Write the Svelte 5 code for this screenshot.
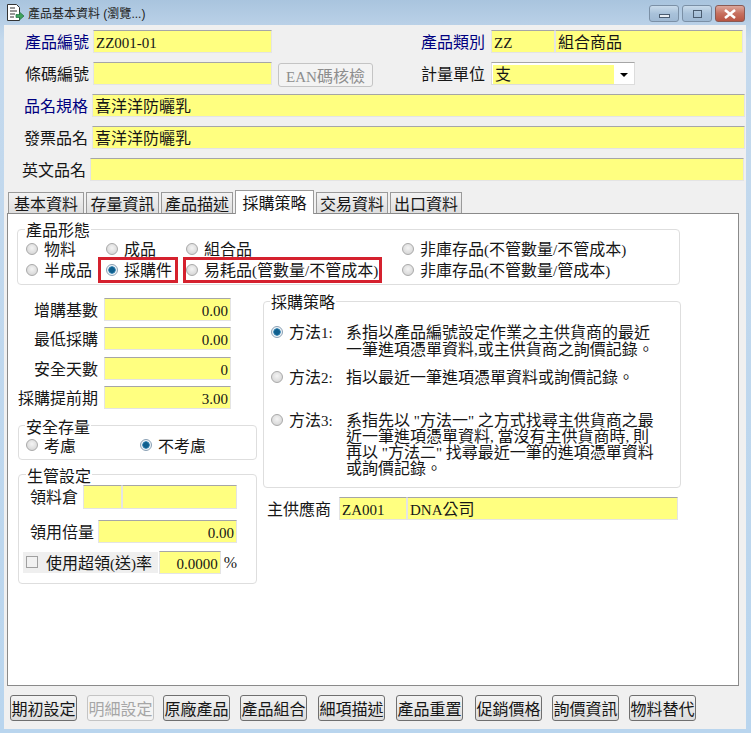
<script>
	const tabs = ["基本資料", "存量資訊", "產品描述", "採購策略", "交易資料", "出口資料"];
	const tools = ["期初設定", "明細設定", "原廠產品", "產品組合", "細項描述", "產品重置", "促銷價格", "詢價資訊", "物料替代"];
	const qty = [
		{ label: "增購基數", value: "0.00" },
		{ label: "最低採購", value: "0.00" },
		{ label: "安全天數", value: "0" },
		{ label: "採購提前期", value: "3.00" }
	];
	const methods = [
		{ label: "方法1:", on: true, lines: ["系指以產品編號設定作業之主供貨商的最近", "一筆進項憑單資料,或主供貨商之詢價記錄。"] },
		{ label: "方法2:", on: false, lines: ["指以最近一筆進項憑單資料或詢價記錄。"] },
		{ label: "方法3:", on: false, lines: ['系指先以 "方法一" 之方式找尋主供貨商之最', "近一筆進項憑單資料, 當沒有主供貨商時, 則", '再以 "方法二" 找尋最近一筆的進項憑單資料', "或詢價記錄。"] }
	];

	// ascii runs are set smaller than the CJK text, like the original PMingLiU
	function chunks(text) {
		return text.split(/([\x20-\x7e]+)/);
	}
</script>

{#snippet t(text)}{#each chunks(text) as part, i}{#if i % 2}<span class="l">{part}</span>{:else}{part}{/if}{/each}{/snippet}

{#snippet radio(text, on = false)}
	<label class="radio"><input type="radio" checked={on} disabled /><span>{@render t(text)}</span></label>
{/snippet}

<div class="window">
	<header class="titlebar">
		<svg class="app-icon" width="20" height="20" viewBox="0 0 20 20">
			<path d="M2.500 1.500h9l3 3v13h-12z" fill="#fff" stroke="#333" />
			<path d="M5 5h5M5 8h7M5 11h5M5 14h4" stroke="#333" />
			<path d="M11 11.500h3.500v-2.500l4.500 4-4.500 4v-2.500h-3.500z" fill="#3fa35c" stroke="#1f6e44" stroke-width=".7" />
		</svg>
		<span class="title">{@render t("產品基本資料 (瀏覽...)")}</span>
		<div class="win-btns">
			<div class="win-btn"><i class="min"></i></div>
			<div class="win-btn"><i class="max"></i></div>
			<div class="win-btn close">
				<svg width="14" height="10" viewBox="0 0 14 10"><path d="M2 1l10 8M12 1L2 9" stroke="#fff" stroke-width="2.600" /></svg>
			</div>
		</div>
	</header>

	<main class="client">
		<div class="row">
			<span class="cap blue">產品編號</span>
			<div class="field w179">{@render t("ZZ001-01")}</div>
			<div class="right">
				<span class="cap-r blue">產品類別</span>
				<div class="field code">{@render t("ZZ")}</div>
				<div class="field grow">組合商品</div>
			</div>
		</div>
		<div class="row">
			<span class="cap">條碼編號</span>
			<div class="field w179"></div>
			<button class="ean" disabled>{@render t("EAN碼核檢")}</button>
			<div class="right">
				<span class="cap-r">計量單位</span>
				<div class="select">
					<div class="select-val">支</div>
					<i class="caret"></i>
				</div>
			</div>
		</div>
		<div class="row">
			<span class="cap blue narrow1">品名規格</span>
			<div class="field grow wide">喜洋洋防曬乳</div>
		</div>
		<div class="row">
			<span class="cap narrow1">發票品名</span>
			<div class="field grow wide">喜洋洋防曬乳</div>
		</div>
		<div class="row">
			<span class="cap narrow2">英文品名</span>
			<div class="field grow wide2"></div>
		</div>

		<nav class="tabs">
			{#each tabs as tab, i}
				<div class="tab" class:active={i === 3}>{tab}</div>
			{/each}
		</nav>

		<section class="panel">
			<fieldset class="form-type">
				<legend>產品形態</legend>
				<div class="type-grid">
					{@render radio("物料")}
					{@render radio("成品")}
					{@render radio("組合品")}
					{@render radio("非庫存品(不管數量/不管成本)")}
					{@render radio("半成品")}
					<div class="mark mark-a">{@render radio("採購件", true)}</div>
					<div class="mark mark-b">{@render radio("易耗品(管數量/不管成本)")}</div>
					{@render radio("非庫存品(不管數量/管成本)")}
				</div>
			</fieldset>

			<div class="columns">
				<div class="col-left">
					<div class="qty">
						{#each qty as q}
							<div class="qty-row">
								<span class="qty-label">{q.label}</span>
								<div class="field num">{@render t(q.value)}</div>
							</div>
						{/each}
					</div>

					<fieldset class="safety">
						<legend>安全存量</legend>
						<div class="safety-row">
							{@render radio("考慮")}
							{@render radio("不考慮", true)}
						</div>
					</fieldset>

					<fieldset class="prod">
						<legend>生管設定</legend>
						<div class="prod-row r1">
							<span>領料倉</span>
							<div class="field wh-code"></div>
							<div class="field wh-name"></div>
						</div>
						<div class="prod-row r2">
							<span>領用倍量</span>
							<div class="field num times">{@render t("0.00")}</div>
						</div>
						<div class="prod-row r3">
							<div class="over">
								<input type="checkbox" disabled />
								<span>{@render t("使用超領(送)率")}</span>
							</div>
							<div class="field num rate">{@render t("0.0000")}</div>
							<span class="pct">%</span>
						</div>
					</fieldset>
				</div>

				<div class="col-right">
					<fieldset class="strategy">
						<legend>採購策略</legend>
						{#each methods as m}
							<div class="method">
								<div class="method-head">{@render radio(m.label, m.on)}</div>
								<p>
									{#each m.lines as line}
										<span class="line">{@render t(line)}</span>
									{/each}
								</p>
							</div>
						{/each}
					</fieldset>
					<div class="vendor">
						<span>主供應商</span>
						<div class="field v-code">{@render t("ZA001")}</div>
						<div class="field grow">{@render t("DNA公司")}</div>
					</div>
				</div>
			</div>
		</section>

		<footer class="toolbar">
			{#each tools as tool, i}
				<button class="tool" disabled={i === 1}>{tool}</button>
			{/each}
		</footer>
	</main>
</div>

<style>
:global(body) {
	margin: 0;
}

.window {
	width: 751px;
	height: 733px;
	display: flex;
	flex-direction: column;
	overflow: hidden;
	background: linear-gradient(180deg, #a9c4de 0, #c4d9ed 40px, #b9d5ee 100%);
	font: 16px/23px "Noto Sans CJK TC", sans-serif;
	color: #161616;
}

.l {
	font-family: "Liberation Serif", serif;
	font-size: 15px;
	line-height: 0;
	white-space: pre;
}

.titlebar {
	height: 25px;
	flex-shrink: 0;
	display: flex;
	align-items: center;
	padding-left: 5px;
}

.app-icon {
	margin-right: 3px;
}

.title {
	font-size: 12px;
	color: #222;
}

.title .l {
	font-family: "Liberation Sans", sans-serif;
	font-size: 12px;
}

.win-btns {
	display: flex;
	gap: 3px;
	margin-left: auto;
	margin-right: 6px;
	align-self: flex-start;
	padding-top: 5px;
}

.win-btn {
	width: 30px;
	height: 17px;
	box-sizing: border-box;
	border: 1px solid #7b90a6;
	border-radius: 3px;
	background: linear-gradient(180deg, #c9dbeb, #a9c2da 50%, #9fb9d3);
	display: flex;
	align-items: center;
	justify-content: center;
}

.win-btn.close {
	border-color: #8a5a54;
	background: linear-gradient(180deg, #dca79c, #c7705f 50%, #b85543);
}

.min {
	width: 11px;
	height: 4px;
	margin-top: 4px;
	border: 1px solid #4a5c70;
	background: #e8eef4;
	box-sizing: border-box;
}

.max {
	width: 9px;
	height: 8px;
	border: 1px solid #4a5c70;
	box-sizing: border-box;
}

.client {
	flex: 1;
	margin: 0 5px 4px 4px;
	padding-top: 5px;
	background: #f0f0f0;
	min-height: 0;
}

.row {
	display: flex;
	height: 23px;
	margin-bottom: 9px;
}

.cap {
	width: 85px;
	margin-right: 4px;
	flex-shrink: 0;
	text-align: right;
}

.cap.narrow1 {
	width: 84px;
}

.cap.narrow2 {
	width: 82px;
}

.blue {
	color: #000080;
}

.field {
	height: 23px;
	box-sizing: border-box;
	padding-left: 2px;
	background: #ffff80;
	border: 1px solid #e4e4e4;
	border-top-color: #a6a6a6;
	line-height: 21px;
	white-space: nowrap;
}

.w179 {
	width: 179px;
}

.grow {
	flex: 1;
}

.wide {
	margin-right: 1px;
}

.wide2 {
	margin-right: 2px;
}

.ean {
	width: 95px;
	height: 24px;
	margin: 1px 0 0 6px;
	padding: 0;
	border: 1px solid #c4c4c4;
	border-radius: 3px;
	background: #f3f3f3;
	color: #8d8d8d;
	font: inherit;
	line-height: 22px;
}

.right {
	width: 322px;
	margin-left: auto;
	margin-right: 3px;
	display: flex;
}

.cap-r {
	width: 70px;
	flex-shrink: 0;
}

.code {
	width: 64px;
}

.select {
	width: 144px;
	height: 23px;
	box-sizing: border-box;
	padding: 2px 20px 2px 1px;
	background: #fff;
	border: 1px solid #dcdcdc;
	border-top-color: #a6a6a6;
	position: relative;
}

.select-val {
	height: 19px;
	line-height: 17px;
	padding-left: 2px;
	background: #ffff80;
}

.caret {
	position: absolute;
	right: 6px;
	top: 10px;
	border: 4px solid transparent;
	border-top-color: #000;
	border-bottom-width: 0;
}

.tabs {
	display: flex;
	align-items: flex-end;
	gap: 2px;
	height: 23px;
	margin: 8px 0 0 4px;
}

.tab {
	width: 72px;
	height: 21px;
	box-sizing: border-box;
	border: 1px solid #9a9a9a;
	border-bottom: 0;
	background: linear-gradient(180deg, #f3f3f3, #dedede);
	text-align: center;
	line-height: 21px;
	white-space: nowrap;
}

.tab:nth-child(1) {
	width: 76px;
}

.tab:nth-child(2) {
	width: 73px;
}

.tab.active {
	width: 79px;
	height: 24px;
	margin-bottom: -1px;
	position: relative;
	z-index: 1;
	background: #fff;
	line-height: 22px;
}

.panel {
	width: 732px;
	height: 473px;
	box-sizing: border-box;
	margin-left: 3px;
	padding: 6px 0 0 9px;
	background: #fff;
	border: 1px solid #8a8a8a;
}

fieldset {
	margin: 0;
	padding: 0;
	min-width: 0;
	box-sizing: border-box;
	border: 1px solid #dedede;
	border-radius: 4px;
}

legend {
	margin-left: -1px;
	padding: 0 1px;
	height: 18px;
	line-height: 18px;
}

.radio {
	display: flex;
	align-items: center;
	height: 21px;
	white-space: nowrap;
}

.radio input {
	appearance: none;
	width: 12px;
	height: 12px;
	margin: 0 6px 0 0;
	flex-shrink: 0;
	border: 1px solid #a9a9a9;
	border-radius: 50%;
	background: radial-gradient(circle at 50% 40%, #f4f4f4, #cfcfcf);
}

.radio input:checked {
	border-color: #8aa0b4;
	background: radial-gradient(circle, #0f5f8e 0 2.500px, #4b93bd 3.500px, #eef3f7 4px);
}

.form-type {
	width: 663px;
	height: 65px;
	padding-left: 8px;
}

.type-grid {
	display: grid;
	grid-template-columns: 80px 80px 216px auto;
}

.mark {
	position: relative;
}

.mark::after {
	content: "";
	position: absolute;
	top: -2px;
	bottom: -3px;
	border: 3px solid #d5212e;
}

.mark-a::after {
	left: -8px;
	right: 8px;
}

.mark-b::after {
	left: -3px;
	right: 20px;
}

.columns {
	display: flex;
	gap: 6px;
	margin: 7px 0 0 1px;
}

.col-left {
	width: 239px;
	padding-top: 6px;
}

.qty {
	display: grid;
	gap: 6.330px;
}

.qty-row {
	display: flex;
	justify-content: flex-end;
	padding-right: 26px;
}

.qty-label {
	margin-right: 6px;
	white-space: nowrap;
}

.num {
	width: 127px;
	text-align: right;
	padding-right: 2px;
}

.safety {
	height: 43px;
	margin-top: 8px;
	padding-left: 7px;
}

.safety-row {
	display: grid;
	grid-template-columns: 114px auto;
}

.prod {
	height: 118px;
	margin-top: 6px;
	padding-left: 4px;
}

.prod legend {
	margin-left: 3px;
}

.prod-row {
	display: flex;
	width: 214px;
}

.prod-row > span:first-child {
	margin-left: 7px;
}

.r1 {
	margin-top: 1px;
	height: 24px;
}

.r1 .field {
	height: 24px;
}

.wh-code {
	width: 39px;
	margin-left: 5px;
}

.wh-name {
	flex: 1;
}

.r2 {
	margin-top: 11px;
}

.times {
	width: 139px;
	margin-left: 4px;
}

.r3 {
	margin-top: 8px;
	align-items: center;
}

.over {
	width: 147px;
	height: 21px;
	display: flex;
	align-items: center;
	gap: 8px;
	background: #efefef;
	padding-left: 2px;
	box-sizing: border-box;
	white-space: nowrap;
}

.over input {
	appearance: none;
	width: 12px;
	height: 12px;
	margin: 0 0 0 1px;
	border: 1px solid #a0a0a0;
	background: #f1f1f1;
}

.rate {
	width: 66px;
	margin-left: 1px;
}

.pct {
	margin-left: 3px;
	font-family: "Liberation Serif", serif;
}

.col-right {
	width: 418px;
}

.strategy {
	height: 196px;
	padding-top: 13px;
	padding-left: 7px;
}

.method {
	display: flex;
	align-items: flex-start;
	line-height: 17px;
}

.method:nth-of-type(2) {
	margin-top: 11px;
}

.method:nth-of-type(3) {
	margin-top: 26px;
}

.method-head {
	width: 75px;
	flex-shrink: 0;
}

.method .radio {
	height: 17px;
}

.method p {
	margin: 0;
}

.line {
	display: block;
	white-space: nowrap;
}

.method:nth-of-type(3) .line {
	line-height: 16px;
}

.vendor {
	display: flex;
	width: 415px;
	margin-top: 9px;
}

.vendor > span {
	margin: 0 8px 0 4px;
	white-space: nowrap;
}

.v-code {
	width: 68px;
}

.toolbar {
	display: flex;
	gap: 10px;
	margin: 9px 0 0 6px;
}

.tool {
	width: 67px;
	height: 26px;
	padding: 0;
	border: 1px solid #6f6f6f;
	border-radius: 3px;
	background: linear-gradient(180deg, #f4f4f4, #dcdcdc);
	color: #161616;
	font: inherit;
	line-height: 24px;
	white-space: nowrap;
}

.tool:disabled {
	border-color: #c4c4c4;
	background: #f4f4f4;
	color: #a6a6a6;
}

.tool:nth-child(3) {
	margin-left: -1px;
}

.tool:nth-child(5),
.tool:nth-child(6) {
	margin-left: 1px;
}

.tool:nth-child(7) {
	margin-left: 2px;
}
</style>
